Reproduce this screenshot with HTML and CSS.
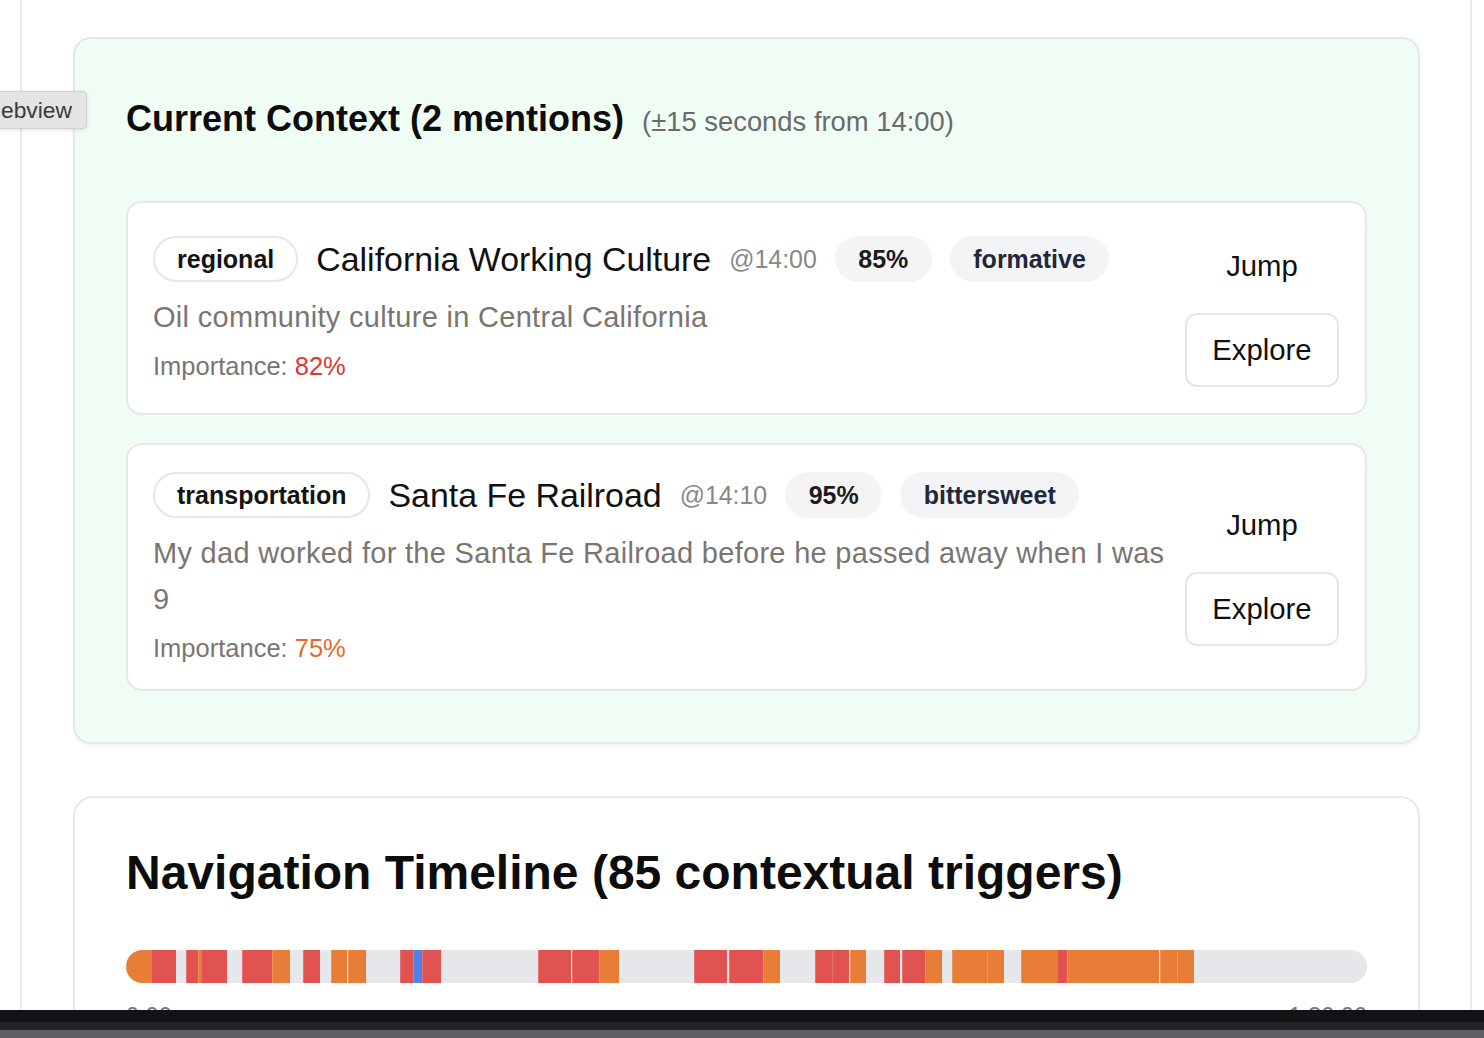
FILE: index.html
```html
<!DOCTYPE html>
<html lang="en">
<head>
<meta charset="utf-8">
<title>Context</title>
<link rel="stylesheet" href="styles.css">
</head>
<body>
<div class="tab-tag">ebview</div>
<div class="page">
  <section class="context-panel">
    <div class="panel-head">
      <h2 class="panel-title">Current Context (2 mentions)</h2>
      <span class="panel-sub">(±15 seconds from 14:00)</span>
    </div>
    <div class="mention-list">
      <article class="mention">
        <div class="mention-body">
          <div class="mention-row">
            <span class="cat-badge">regional</span>
            <span class="mention-title">California Working Culture</span>
            <span class="mention-time">@14:00</span>
            <span class="pill pill-score">85%</span>
            <span class="pill pill-tone">formative</span>
          </div>
          <p class="mention-desc">Oil community culture in Central California</p>
          <p class="mention-imp">Importance: <span class="imp-high">82%</span></p>
        </div>
        <div class="mention-actions">
          <button class="btn-plain">Jump</button>
          <button class="btn-outline">Explore</button>
        </div>
      </article>
      <article class="mention">
        <div class="mention-body">
          <div class="mention-row">
            <span class="cat-badge">transportation</span>
            <span class="mention-title">Santa Fe Railroad</span>
            <span class="mention-time">@14:10</span>
            <span class="pill pill-score">95%</span>
            <span class="pill pill-tone">bittersweet</span>
          </div>
          <p class="mention-desc">My dad worked for the Santa Fe Railroad before he passed away when I was 9</p>
          <p class="mention-imp">Importance: <span class="imp-mid">75%</span></p>
        </div>
        <div class="mention-actions">
          <button class="btn-plain">Jump</button>
          <button class="btn-outline">Explore</button>
        </div>
      </article>
    </div>
  </section>

  <section class="timeline-panel">
    <h2 class="timeline-title">Navigation Timeline (85 contextual triggers)</h2>
    <div class="timeline-bar">
      <span class="seg seg-orange" style="left:0%;width:2.02%"></span>
      <span class="seg seg-red" style="left:2.02%;width:2.02%"></span>
      <span class="seg seg-red" style="left:4.84%;width:0.97%"></span>
      <span class="seg seg-orange" style="left:5.81%;width:0.24%"></span>
      <span class="seg seg-red" style="left:6.05%;width:2.10%"></span>
      <span class="seg seg-red" style="left:9.35%;width:2.42%"></span>
      <span class="seg seg-orange" style="left:11.77%;width:1.45%"></span>
      <span class="seg seg-red" style="left:14.27%;width:1.37%"></span>
      <span class="seg seg-orange" style="left:16.53%;width:1.29%"></span>
      <span class="seg seg-orange" style="left:17.90%;width:1.45%"></span>
      <span class="seg seg-red" style="left:22.10%;width:1.05%"></span>
      <span class="seg seg-blue" style="left:23.15%;width:0.73%"></span>
      <span class="seg seg-red" style="left:23.87%;width:1.53%"></span>
      <span class="seg seg-red" style="left:33.23%;width:2.66%"></span>
      <span class="seg seg-red" style="left:35.97%;width:2.18%"></span>
      <span class="seg seg-orange" style="left:38.15%;width:1.61%"></span>
      <span class="seg seg-red" style="left:45.73%;width:2.66%"></span>
      <span class="seg seg-red" style="left:48.55%;width:2.74%"></span>
      <span class="seg seg-orange" style="left:51.29%;width:1.37%"></span>
      <span class="seg seg-red" style="left:55.48%;width:1.37%"></span>
      <span class="seg seg-red" style="left:56.85%;width:1.45%"></span>
      <span class="seg seg-orange" style="left:58.31%;width:1.29%"></span>
      <span class="seg seg-red" style="left:61.05%;width:1.29%"></span>
      <span class="seg seg-red" style="left:62.50%;width:1.85%"></span>
      <span class="seg seg-orange" style="left:64.35%;width:1.37%"></span>
      <span class="seg seg-orange" style="left:66.53%;width:2.82%"></span>
      <span class="seg seg-orange" style="left:69.35%;width:1.37%"></span>
      <span class="seg seg-orange" style="left:72.10%;width:2.90%"></span>
      <span class="seg seg-red" style="left:75.00%;width:0.81%"></span>
      <span class="seg seg-orange" style="left:75.81%;width:7.42%"></span>
      <span class="seg seg-orange" style="left:83.31%;width:1.37%"></span>
      <span class="seg seg-orange" style="left:84.68%;width:1.37%"></span>
    </div>
    <div class="timeline-labels">
      <span>0:00</span>
      <span>1:30:00</span>
    </div>
  </section>
</div>
<div class="dock">
  <div class="dock-a"></div>
  <div class="dock-b"></div>
  <div class="dock-c"></div>
</div>
</body>
</html>
```

FILE: styles.css
```css
* { box-sizing: border-box; }

html, body {
  margin: 0;
  padding: 0;
  background: #ffffff;
  font-family: "Liberation Sans", Arial, sans-serif;
  color: #111111;
  overflow: hidden;
}

.page {
  margin-left: 20px;
  width: 1452px;
  min-height: 1038px;
  border-left: 2px solid #ebebeb;
  border-right: 2px solid #ebebeb;
  padding: 37px 50px 0 51px;
}

.tab-tag {
  position: absolute;
  left: -1px;
  top: 91px;
  height: 38px;
  padding: 0 14px 0 1px;
  background: #e4e4e4;
  border: 1px solid #d2d2d2;
  border-radius: 0 4px 4px 0;
  box-shadow: 0 1px 4px rgba(0, 0, 0, 0.12);
  font-size: 22.8px;
  line-height: 36px;
  color: #3a3a3a;
  z-index: 5;
}

/* Context panel */
.context-panel {
  background: #f0fdf4;
  border: 2px solid #e6e8e6;
  border-radius: 18px;
  box-shadow: 0 2px 4px rgba(0, 0, 0, 0.05);
  padding: 53px 51px 51px 51px;
}

.panel-head {
  display: flex;
  align-items: baseline;
  gap: 18px;
  margin-bottom: 55px;
}

.panel-title {
  margin: 0;
  font-size: 36px;
  font-weight: 700;
  line-height: 54px;
  color: #0d0d0d;
}

.panel-sub {
  font-size: 27.4px;
  color: #6b6b6b;
}

.mention-list {
  display: flex;
  flex-direction: column;
  gap: 28px;
}

.mention {
  display: flex;
  align-items: center;
  gap: 16px;
  background: #ffffff;
  border: 2px solid #e7e7e7;
  border-radius: 16px;
  padding: 26px 26px 26px 25px;
}

.mention-body {
  flex: 1;
  min-width: 0;
}

.mention-row {
  display: flex;
  align-items: center;
  gap: 18px;
  height: 46px;
  margin-top: 1px;
}

.cat-badge {
  display: inline-flex;
  align-items: center;
  height: 46px;
  padding: 0 22px;
  border: 2px solid #e6e6e6;
  border-radius: 23px;
  font-size: 25px;
  font-weight: 700;
  color: #141414;
  background: #ffffff;
}

.mention-title {
  font-size: 33.9px;
  color: #111111;
}

.mention-time {
  font-size: 24.9px;
  color: #8a8784;
}

.pill {
  display: inline-flex;
  align-items: center;
  height: 46px;
  padding: 0 23.5px;
  border-radius: 23px;
  font-size: 25px;
  font-weight: 700;
}

.pill-score {
  background: #f4f4f4;
  color: #1c1c1c;
}

.pill-tone {
  background: #f3f4f6;
  color: #1e293b;
}

.mention-desc {
  margin: 12px 0 0;
  font-size: 29px;
  letter-spacing: 0.3px;
  line-height: 46px;
  color: #7a7571;
}

.mention-imp {
  margin: 11px 0 0;
  font-size: 25.5px;
  line-height: 30px;
  color: #7a7571;
}

.imp-high { color: #d93a37; }
.imp-mid { color: #e8672f; }

.mention-actions {
  display: flex;
  flex-direction: column;
  align-items: center;
  gap: 10px;
  width: 154px;
}

.btn-plain,
.btn-outline {
  font-family: inherit;
  font-size: 29.3px;
  line-height: 42px;
  color: #111111;
  height: 74px;
  width: 154px;
  padding: 14px 0;
  background: transparent;
  cursor: pointer;
}

.btn-plain {
  border: 2px solid transparent;
}

.btn-outline {
  background: #ffffff;
  border: 2px solid #e6e6e6;
  border-radius: 12px;
}

/* Timeline */
.timeline-panel {
  margin-top: 52px;
  background: #ffffff;
  border: 2px solid #e9e9e9;
  border-radius: 20px;
  padding: 47px 51px 40px 51px;
}

.timeline-title {
  margin: 0 0 49px;
  font-size: 48px;
  font-weight: 700;
  line-height: 56px;
  color: #0d0d0d;
}

.timeline-bar {
  position: relative;
  height: 33px;
  background: #e5e7eb;
  border-radius: 17px;
  overflow: hidden;
}

.seg {
  position: absolute;
  top: 0;
  bottom: 0;
  box-shadow: inset 1px 0 0 rgba(255, 255, 255, 0.18);
}

.seg-red { background: #e05350; }
.seg-orange { background: #e87d37; }
.seg-blue { background: #4f80ec; }

.timeline-labels {
  display: flex;
  justify-content: space-between;
  margin-top: 20px;
  font-size: 23.5px;
  color: #777777;
}

/* Bottom dock overlay */
.dock {
  position: fixed;
  left: 0;
  right: 0;
  bottom: 0;
  height: 28px;
  display: flex;
  flex-direction: column;
  z-index: 10;
}

.dock-a { height: 12px; background: #121317; }
.dock-b { height: 8px; background: #212226; }
.dock-c { height: 8px; background: #5f6064; }
```
